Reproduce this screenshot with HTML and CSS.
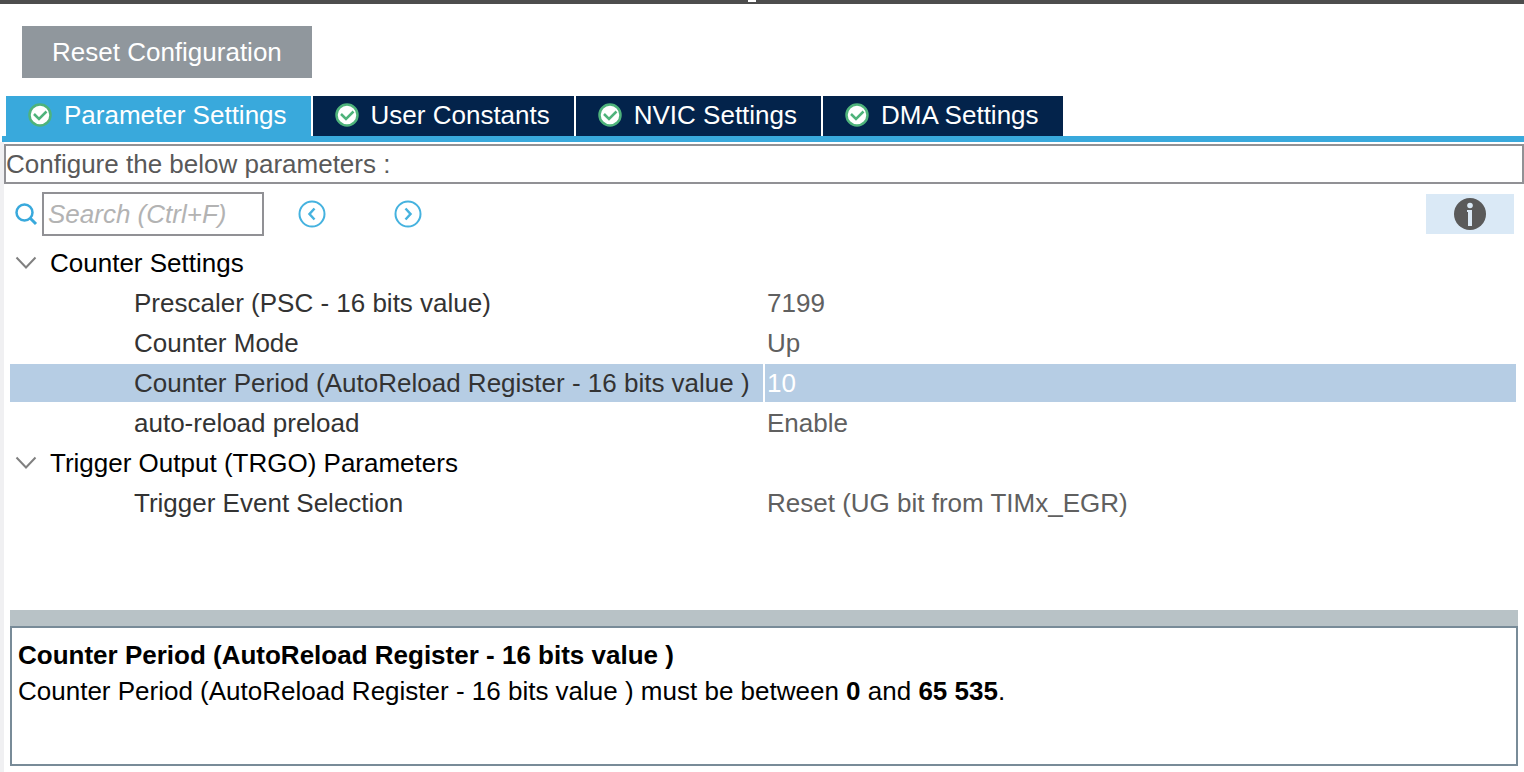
FILE: index.html
```html
<!DOCTYPE html>
<html lang="en">
<head>
    <meta charset="UTF-8">
    <meta name="viewport" content="width=device-width, initial-scale=1.0">
    <title>Configuration</title>
    <link rel="stylesheet" href="styles.css">
</head>
<body>
    <!-- Shared icons -->
    <svg class="sprite" aria-hidden="true">
        <symbol id="check" viewBox="0 0 24 24">
            <circle cx="12" cy="12" r="10.5" fill="#fff" stroke="#4fb37b" stroke-width="2.5"/>
            <path d="M6 11l5 5 7.5-7.5" fill="none" stroke="#4fb37b" stroke-width="2.5"/>
        </symbol>
        <symbol id="chevron" viewBox="0 0 22 14">
            <path d="M1.5 1.5L11 11.5l9.5-10" fill="none" stroke="#808080" stroke-width="2"/>
        </symbol>
    </svg>

    <header class="title-bar"><span class="title-mark"></span></header>

    <div class="actions">
        <button type="button" class="reset-button">Reset Configuration</button>
    </div>

    <nav class="tabs" role="tablist">
        <button type="button" class="tab active" role="tab" aria-selected="true"><svg class="tab-icon"><use href="#check"/></svg>Parameter Settings</button>
        <button type="button" class="tab" role="tab"><svg class="tab-icon"><use href="#check"/></svg>User Constants</button>
        <button type="button" class="tab" role="tab"><svg class="tab-icon"><use href="#check"/></svg>NVIC Settings</button>
        <button type="button" class="tab" role="tab"><svg class="tab-icon"><use href="#check"/></svg>DMA Settings</button>
    </nav>

    <main class="panel">
        <p class="hint">Configure the below parameters :</p>

        <div class="toolbar">
            <label for="search" class="search-label" aria-label="Search">
                <svg width="24" height="24" viewBox="0 0 24 24" fill="none" stroke="#39a9dc">
                    <circle cx="10.5" cy="10.5" r="8" stroke-width="2.5"/>
                    <path d="M16 16l6 6" stroke-width="3"/>
                </svg>
            </label>
            <input type="text" id="search" class="search" placeholder="Search (Ctrl+F)">
            <button type="button" class="icon-button" aria-label="Previous">
                <svg width="28" height="28" viewBox="0 0 28 28" fill="none" stroke="#45b2df" stroke-width="2">
                    <circle cx="14" cy="14" r="12.5"/>
                    <path d="M16.5 8.5l-5 5.5 5 5.5" stroke-width="2.5"/>
                </svg>
            </button>
            <button type="button" class="icon-button" aria-label="Next">
                <svg width="28" height="28" viewBox="0 0 28 28" fill="none" stroke="#45b2df" stroke-width="2">
                    <circle cx="14" cy="14" r="12.5"/>
                    <path d="M11.5 8.5l5 5.5-5 5.5" stroke-width="2.5"/>
                </svg>
            </button>
            <button type="button" class="info-button" aria-label="Information">
                <svg width="34" height="34" viewBox="0 0 34 34">
                    <circle cx="17" cy="17" r="16" fill="#5a5a5a"/>
                    <circle cx="17" cy="8.5" r="2.8" fill="#dbe9f5"/>
                    <path d="M14 13h5v16h-4V15h-1z" fill="#dbe9f5"/>
                </svg>
            </button>
        </div>

        <div class="tree">
            <table class="params">
                <tbody>
                    <tr class="group"><th colspan="2"><svg class="chevron"><use href="#chevron"/></svg>Counter Settings</th></tr>
                    <tr><td>Prescaler (PSC - 16 bits value)</td><td>7199</td></tr>
                    <tr><td>Counter Mode</td><td>Up</td></tr>
                    <tr class="selected"><td>Counter Period (AutoReload Register - 16 bits value )</td><td>10</td></tr>
                    <tr><td>auto-reload preload</td><td>Enable</td></tr>
                    <tr class="group"><th colspan="2"><svg class="chevron"><use href="#chevron"/></svg>Trigger Output (TRGO) Parameters</th></tr>
                    <tr><td>Trigger Event Selection</td><td>Reset (UG bit from TIMx_EGR)</td></tr>
                </tbody>
            </table>
        </div>

        <section class="details">
            <h2>Counter Period (AutoReload Register - 16 bits value )</h2>
            <p>Counter Period (AutoReload Register - 16 bits value ) must be between <b>0</b> and <b>65 535</b>.</p>
        </section>
    </main>
</body>
</html>
```

FILE: styles.css
```css
* {
    margin: 0;
    padding: 0;
    box-sizing: border-box;
}

body {
    font-family: 'Liberation Sans', Arial, sans-serif;
    font-size: 26px;
    line-height: 36px;
    color: #333;
    background-color: #fff;
    display: flex;
    flex-direction: column;
    min-height: 100vh;
}

button, input {
    font: inherit;
    border: none;
    border-radius: 0;
}

svg {
    display: block;
    flex-shrink: 0;
}

.sprite {
    position: absolute;
    width: 0;
    height: 0;
}

.title-bar {
    height: 4px;
    background-color: #4d4d4d;
    display: flex;
    justify-content: center;
}

.title-mark {
    width: 8px;
    height: 2px;
    margin-right: 20px;
    background-color: #fff;
}

.actions {
    padding: 22px 22px 18px;
}

.reset-button {
    display: block;
    height: 52px;
    padding: 0 30px;
    background-color: #90979d;
    color: #fff;
}

/* Tabs */
.tabs {
    display: flex;
    gap: 2px;
    margin-left: 2px;
    padding-left: 4px;
    border-bottom: 6px solid #39a9dc;
}

.tab {
    display: flex;
    align-items: center;
    gap: 12px;
    height: 40px;
    padding: 0 24px 2px 22px;
    background-color: #03234b;
    color: #fff;
}

.tab.active {
    background-color: #39a9dc;
}

.tab-icon {
    width: 24px;
    height: 24px;
}

/* Parameters */
.panel {
    flex: 1;
    display: flex;
    flex-direction: column;
    padding: 2px 0 6px;
    border-left: 4px solid #f0f0f2;
}

.hint {
    height: 40px;
    border: 2px solid #919195;
    color: #595959;
}

.toolbar {
    display: flex;
    align-items: center;
    padding: 8px 10px 8px;
}

.search-label {
    margin-right: 4px;
}

.search {
    width: 222px;
    height: 44px;
    margin-right: 34px;
    padding: 0 4px;
    border: 2px solid #919195;
    color: #333;
}

.search::placeholder {
    color: #b3b3b3;
    font-style: italic;
    opacity: 1;
}

.icon-button {
    margin-right: 68px;
    background: none;
}

.info-button {
    width: 88px;
    height: 40px;
    margin-left: auto;
    background-color: #dae9f6;
    display: flex;
    align-items: center;
    justify-content: center;
}

.tree {
    flex: 1;
    padding: 0 8px 0 6px;
}

.params {
    width: 100%;
    table-layout: fixed;
    border-spacing: 0;
}

.params th, .params td {
    height: 40px;
    border-bottom: 2px solid #fff;
    text-align: left;
    font-weight: normal;
    white-space: nowrap;
}

.params th {
    color: #000;
    padding-left: 5px;
}

.params td:first-child {
    padding-left: 124px;
}

.params td + td {
    padding-left: 2px;
    border-left: 2px solid #fff;
    color: #606060;
}

.params .selected td {
    background-color: #b6cde4;
}

.params .selected td + td {
    color: #fff;
}

.chevron {
    display: inline-block;
    width: 22px;
    height: 14px;
    margin: 0 13px 4px 0;
    vertical-align: middle;
}

.details {
    height: 156px;
    margin: 0 6px;
    padding: 0 6px;
    border: 2px solid #788b98;
    border-top: none;
    color: #000;
}

/* Splitter above the description */
.details::before {
    content: '';
    display: block;
    height: 16px;
    margin: 0 -8px 9px;
    background-color: #b8c2c6;
    border-bottom: 2px solid #788b98;
}

.details h2 {
    font-size: 26px;
}
```
